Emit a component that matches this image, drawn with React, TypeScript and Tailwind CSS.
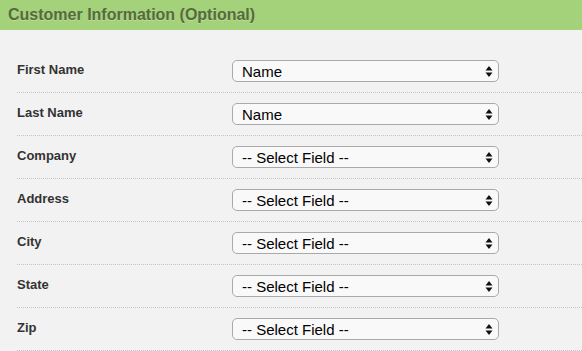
import React from 'react';

const rows = [
  { label: 'First Name', value: 'Name' },
  { label: 'Last Name', value: 'Name' },
  { label: 'Company', value: '-- Select Field --' },
  { label: 'Address', value: '-- Select Field --' },
  { label: 'City', value: '-- Select Field --' },
  { label: 'State', value: '-- Select Field --' },
  { label: 'Zip', value: '-- Select Field --' },
];

function SelectBox({ value }: { value: string }) {
  return (
    <div className="flex items-center justify-between w-[267px] h-[22px] rounded-[5px] border border-[#a9a9a9] bg-[#f9f9f9] pl-[9px] pr-[5px]">
      <span className="text-[15px] leading-none text-black">{value}</span>
      <svg width="8" height="13" viewBox="0 0 8 13">
        <path d="M4 1 L7.5 5.5 L0.5 5.5 Z" fill="#111" />
        <path d="M4 12 L7.5 7.5 L0.5 7.5 Z" fill="#111" />
      </svg>
    </div>
  );
}

export default function App() {
  return (
    <div className="w-[582px] h-[351px] overflow-hidden bg-[#f2f2f2] font-['Liberation_Sans',Arial,sans-serif]">
      {/* Header */}
      <div className="h-[30px] bg-[#a3d27a] flex items-center pl-[8px]">
        <h2 className="text-[16px] font-bold text-[#566a3e] [text-shadow:0_1px_0_rgba(255,255,255,0.25)]">
          Customer Information (Optional)
        </h2>
      </div>

      {/* Fields */}
      <div className="pt-[20px] pl-[17px]">
        {rows.map((row) => (
          <div
            key={row.label}
            className="flex items-center h-[43px] border-b border-dotted border-[#c4c4c4]"
          >
            <label className="w-[215px] text-[13px] font-bold text-[#333] -mt-[3px]">
              {row.label}
            </label>
            <SelectBox value={row.value} />
          </div>
        ))}
      </div>
    </div>
  );
}
